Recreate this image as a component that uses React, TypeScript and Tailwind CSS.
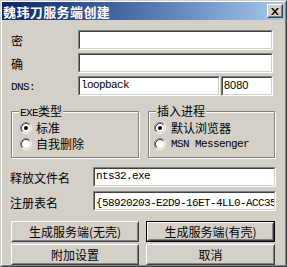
const CJK = "font-['Noto_Sans_CJK_SC',sans-serif]";
const MONO = "font-['Liberation_Mono',monospace] text-[11px] tracking-[-0.6px]";

const SUNKEN_OUT = 'border border-t-[#808080] border-l-[#808080] border-b-white border-r-white';
const SUNKEN_IN = 'border border-t-[#404040] border-l-[#404040] border-b-[#d4d0c8] border-r-[#d4d0c8]';
const RAISED_OUT = 'border border-t-white border-l-white border-b-[#404040] border-r-[#404040]';
const RAISED_IN = 'border border-t-[#d4d0c8] border-l-[#d4d0c8] border-b-[#808080] border-r-[#808080]';

function Field({ className, value = '', textClass = MONO }: { className: string; value?: string; textClass?: string }) {
  return (
    <div className={`${SUNKEN_OUT} h-[20px] ${className}`}>
      <div className={`${SUNKEN_IN} h-full overflow-hidden whitespace-nowrap bg-white pl-[1px] pt-[1px] leading-[13px] text-black ${textClass}`}>
        {value}
      </div>
    </div>
  );
}

function Radio({ checked }: { checked?: boolean }) {
  return (
    <svg width="12" height="12" viewBox="0 0 12 12" className="shrink-0">
      <circle cx="6" cy="6" r="4.5" fill="#fff" />
      <path d="M2.11 9.89A5.5 5.5 0 0 1 9.89 2.11" stroke="#808080" fill="none" />
      <path d="M9.89 2.11A5.5 5.5 0 0 1 2.11 9.89" stroke="#fff" fill="none" />
      <path d="M2.82 9.18A4.5 4.5 0 0 1 9.18 2.82" stroke="#404040" fill="none" />
      <path d="M9.18 2.82A4.5 4.5 0 0 1 2.82 9.18" stroke="#d4d0c8" fill="none" />
      {checked && <circle cx="6" cy="6" r="2" fill="#000" />}
    </svg>
  );
}

function Button({ label, className, isDefault }: { label: string; className: string; isDefault?: boolean }) {
  return (
    <div className={`h-[21px] ${className} ${isDefault ? 'border border-black' : ''}`}>
      <div className={`${RAISED_OUT} h-full`}>
        <div className={`${RAISED_IN} flex h-full items-center justify-center text-[12px] leading-none text-black ${CJK}`}>
          {label}
        </div>
      </div>
    </div>
  );
}

function Group({ title, className, children }: { title: React.ReactNode; className: string; children: React.ReactNode }) {
  return (
    <div className={`relative h-[47px] border border-[#808080] shadow-[inset_1px_1px_0_#fff,1px_1px_0_#fff] ${className}`}>
      <span className={`absolute -top-[8px] left-[7px] bg-[#d4d0c8] px-[1px] text-[12px] leading-[14px] text-black ${CJK}`}>
        {title}
      </span>
      {children}
    </div>
  );
}

export default function App() {
  return (
    <div className="h-[267px] w-[287px] border border-t-[#d4d0c8] border-l-[#d4d0c8] border-b-[#404040] border-r-[#404040] bg-[#d4d0c8]">
      <div className="flex h-full flex-col border border-t-white border-l-white border-b-[#808080] border-r-[#808080]">
        {/* title bar */}
        <div className="flex h-[19px] items-center justify-between bg-linear-to-r from-[#0a246a] to-[#a6caf0] pl-[1px] pr-[2px]">
          <span className={`text-[13px] font-bold leading-none tracking-[0.4px] text-white ${CJK}`}>魏玮刀服务端创建</span>
          <div className={`${RAISED_OUT} h-[14px] w-[16px]`}>
            <div className={`${RAISED_IN} flex h-full items-center justify-center bg-[#d4d0c8]`}>
              <svg width="8" height="7" viewBox="0 0 8 7">
                <path d="M0 0h2l2 2.5L6 0h2L5 3.5 8 7H6L4 4.5 2 7H0l3-3.5z" fill="#000" />
              </svg>
            </div>
          </div>
        </div>

        <div className={`flex flex-col text-[12px] text-black ${CJK}`}>
          <div className="mt-[9px] flex items-center">
            <span className="w-[76px] pl-[9px] pt-[3px]">密</span>
            <Field className="w-[195px]" />
          </div>
          <div className="mt-[2px] flex items-center">
            <span className="w-[76px] pl-[9px] pt-[3px]">确</span>
            <Field className="w-[195px]" />
          </div>
          <div className="mt-[3px] flex items-center">
            <span className={`w-[76px] pl-[9px] pt-[3px] ${MONO}`}>DNS:</span>
            <Field className="w-[142px]" value="loopback" />
            <Field className="ml-[1px] w-[52px]" value="8080" textClass="font-['Liberation_Sans',sans-serif] text-[11px]" />
          </div>

          <div className="mt-[15px] flex gap-[9px] pl-[9px]">
            <Group className="w-[128px]" title={<><span className={MONO}>EXE</span>类型</>}>
              <div className="flex flex-col gap-[4px] pl-[8px] pt-[10px]">
                <div className="flex items-center gap-[4px] leading-[12px]"><Radio checked />标准</div>
                <div className="flex items-center gap-[4px] leading-[12px]"><Radio />自我删除</div>
              </div>
            </Group>
            <Group className="w-[127px]" title="插入进程">
              <div className="flex flex-col gap-[4px] pl-[5px] pt-[10px]">
                <div className="flex items-center gap-[5px] leading-[12px]"><Radio checked />默认浏览器</div>
                <div className="flex items-center gap-[5px] leading-[12px]"><Radio /><span className={MONO}>MSN Messenger</span></div>
              </div>
            </Group>
          </div>

          <div className="mt-[8px] flex items-center">
            <span className="w-[91px] pl-[8px] pt-[3px]">释放文件名</span>
            <Field className="w-[183px]" value="nts32.exe" />
          </div>
          <div className="mt-[2px] flex items-center">
            <span className="w-[91px] pl-[8px] pt-[5px]">注册表名</span>
            <Field className="w-[183px]" value="{58920203-E2D9-16ET-4LL0-ACC35" textClass={`${MONO} pt-[4px]`} />
          </div>

          <div className="mt-[9px] flex gap-[7px] pl-[9px]">
            <Button className="w-[128px]" label="生成服务端(无壳)" />
            <Button className="w-[129px]" label="生成服务端(有壳)" isDefault />
          </div>
          <div className="mt-[2px] flex gap-[7px] pl-[9px]">
            <Button className="w-[128px]" label="附加设置" />
            <Button className="w-[129px]" label="取消" />
          </div>
        </div>
      </div>
    </div>
  );
}
